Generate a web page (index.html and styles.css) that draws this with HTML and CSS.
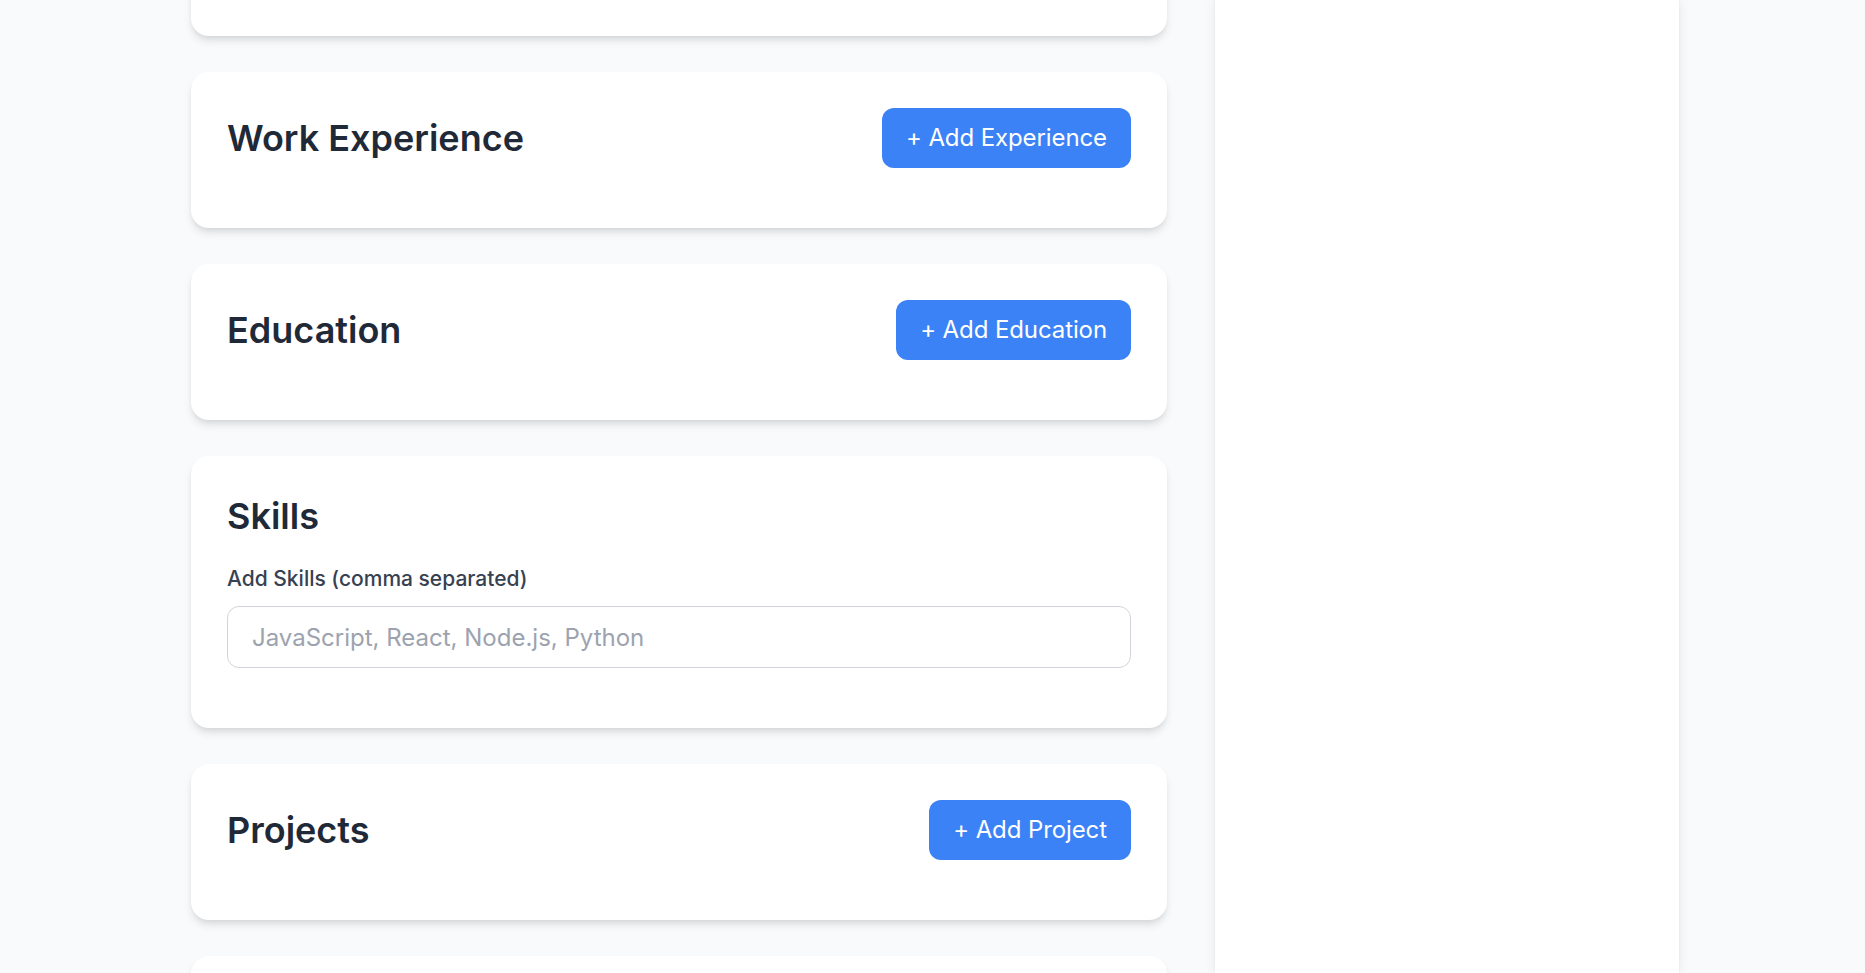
FILE: index.html
```html
<!DOCTYPE html>
<html lang="en">
<head>
<meta charset="utf-8">
<title>Resume Builder</title>
<link rel="stylesheet" href="styles.css">
</head>
<body>
<div class="layout">
  <main class="editor">
    <section class="card card-scrolled"></section>

    <section class="card">
      <div class="card-header">
        <h2 class="card-title">Work Experience</h2>
        <button class="btn-add" type="button">+ Add Experience</button>
      </div>
    </section>

    <section class="card">
      <div class="card-header">
        <h2 class="card-title">Education</h2>
        <button class="btn-add" type="button">+ Add Education</button>
      </div>
    </section>

    <section class="card">
      <h2 class="card-title card-title-block">Skills</h2>
      <div class="field">
        <label class="field-label" for="skills">Add Skills (comma separated)</label>
        <input class="field-input" id="skills" type="text" placeholder="JavaScript, React, Node.js, Python">
      </div>
    </section>

    <section class="card">
      <div class="card-header">
        <h2 class="card-title">Projects</h2>
        <button class="btn-add" type="button">+ Add Project</button>
      </div>
    </section>

    <section class="card card-next"></section>
  </main>

  <aside class="preview"></aside>
</div>
</body>
</html>
```

FILE: styles.css
```css
* {
  box-sizing: border-box;
}

html, body {
  margin: 0;
  padding: 0;
  height: 973px;
  overflow: hidden;
}

body {
  background: #f9fafb;
  font-family: Inter, "Noto Sans", "Liberation Sans", sans-serif;
  color: #1f2937;
}

.layout {
  display: flex;
  align-items: flex-start;
  gap: 48px;
  padding-left: 191px;
  height: 973px;
}

.editor {
  width: 976px;
  flex: none;
  display: flex;
  flex-direction: column;
  gap: 36px;
}

.card {
  background: #ffffff;
  border-radius: 18px;
  padding: 36px;
  box-shadow: 0 6px 9px -1.5px rgba(0, 0, 0, 0.1), 0 3px 6px -3px rgba(0, 0, 0, 0.1);
}

.card-scrolled {
  height: 156px;
  margin-top: -120px;
}

.card-next {
  height: 200px;
}

.card-header {
  display: flex;
  align-items: center;
  justify-content: space-between;
  margin-bottom: 24px;
}

.card-title {
  margin: 0;
  font-size: 36px;
  line-height: 48px;
  font-weight: 600;
  color: #1f2937;
}

.card-title-block {
  margin-bottom: 24px;
}

.btn-add {
  height: 60px;
  padding: 0 24px;
  border: none;
  border-radius: 12px;
  background: #3b82f6;
  color: #ffffff;
  font-family: inherit;
  font-size: 24px;
  line-height: 36px;
  font-weight: 400;
  letter-spacing: -0.1px;
  cursor: pointer;
}

.field {
  display: flex;
  flex-direction: column;
  margin-bottom: 24px;
}

.field-label {
  font-size: 21px;
  line-height: 30px;
  font-weight: 500;
  color: #374151;
  margin-bottom: 12px;
}

.field-input {
  height: 62px;
  padding: 0 24px;
  border: 1.5px solid #d1d5db;
  border-radius: 12px;
  font-family: inherit;
  font-size: 24px;
  color: #1f2937;
  background: #ffffff;
  outline: none;
}

.field-input::placeholder {
  color: #9ca3af;
}

.preview {
  width: 464px;
  flex: none;
  height: 973px;
  background: #ffffff;
  box-shadow: 0 0 12px rgba(0, 0, 0, 0.08), 0 0 2px rgba(0, 0, 0, 0.06);
}
```
